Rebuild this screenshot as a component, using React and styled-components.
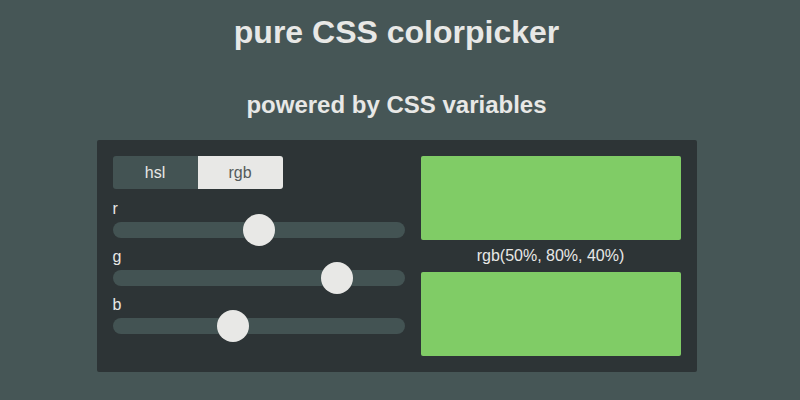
import React, { useState } from 'react'
import styled, { createGlobalStyle } from 'styled-components'

const GlobalStyle = createGlobalStyle`
  html, body {
    margin: 0;
    padding: 0;
    background: #465656;
    font-family: "Liberation Sans", Arial, sans-serif;
    color: #e8e8e6;
  }
`

const Page = styled.div`
  display: flex;
  flex-direction: column;
  align-items: center;
  padding: 14px 7px 0 0;
`

const Title = styled.h1`
  margin: 0;
  font-size: 32px;
  line-height: 37px;
  font-weight: bold;
`

const Subtitle = styled.h2`
  margin: 40px 0 21px;
  font-size: 24px;
  line-height: 28px;
  font-weight: bold;
`

const Panel = styled.div`
  width: 600px;
  box-sizing: border-box;
  padding: 16px;
  background: #2d3436;
  border-radius: 2px;
  display: flex;
  gap: 16px;
`

const Controls = styled.div`
  width: 292px;
  display: flex;
  flex-direction: column;
`

const Tabs = styled.div`
  display: flex;
  width: 170px;
  height: 33px;
  margin-bottom: 9px;
  border-radius: 3px;
  overflow: hidden;
`

const Tab = styled.button`
  flex: 1;
  border: 0;
  padding: 0;
  font: 16px "Liberation Sans", Arial, sans-serif;
  cursor: pointer;
  background: ${p => (p.$active ? '#e8e8e6' : '#435353')};
  color: ${p => (p.$active ? '#555b5b' : '#e8e8e6')};
`

const SliderRow = styled.label`
  display: flex;
  flex-direction: column;
`

const SliderName = styled.span`
  font-size: 16px;
  line-height: 16px;
  padding-top: 3px;
  margin-bottom: -3px;
`

const Range = styled.input`
  -webkit-appearance: none;
  appearance: none;
  width: 100%;
  height: 32px;
  margin: 0;
  background: transparent;

  &::-webkit-slider-runnable-track {
    height: 16px;
    border-radius: 8px;
    background: #435353;
  }

  &::-webkit-slider-thumb {
    -webkit-appearance: none;
    width: 32px;
    height: 32px;
    margin-top: -8px;
    border-radius: 50%;
    background: #e8e8e6;
    border: 0;
  }

  &:focus {
    outline: none;
  }
`

const Preview = styled.div`
  width: 260px;
  display: flex;
  flex-direction: column;
`

const Swatch = styled.div`
  height: 84px;
  border-radius: 2px;
  background: ${p => p.$color};
`

const ColorLabel = styled.div`
  height: 32px;
  display: flex;
  align-items: center;
  justify-content: center;
  font-size: 16px;
`

const channels = ['r', 'g', 'b']

export default function App() {
  const [mode, setMode] = useState('rgb')
  const [values, setValues] = useState({ r: 50, g: 80, b: 40 })

  const color = `rgb(${values.r}%, ${values.g}%, ${values.b}%)`

  return (
    <Page>
      <GlobalStyle />
      <Title>pure CSS colorpicker</Title>
      <Subtitle>powered by CSS variables</Subtitle>
      <Panel>
        <Controls>
          <Tabs>
            <Tab $active={mode === 'hsl'} onClick={() => setMode('hsl')}>hsl</Tab>
            <Tab $active={mode === 'rgb'} onClick={() => setMode('rgb')}>rgb</Tab>
          </Tabs>
          {channels.map(c => (
            <SliderRow key={c}>
              <SliderName>{c}</SliderName>
              <Range
                type="range"
                min="0"
                max="100"
                value={values[c]}
                onChange={e => setValues({ ...values, [c]: Number(e.target.value) })}
              />
            </SliderRow>
          ))}
        </Controls>
        <Preview>
          <Swatch $color={color} />
          <ColorLabel>{color}</ColorLabel>
          <Swatch $color={color} />
        </Preview>
      </Panel>
    </Page>
  )
}
